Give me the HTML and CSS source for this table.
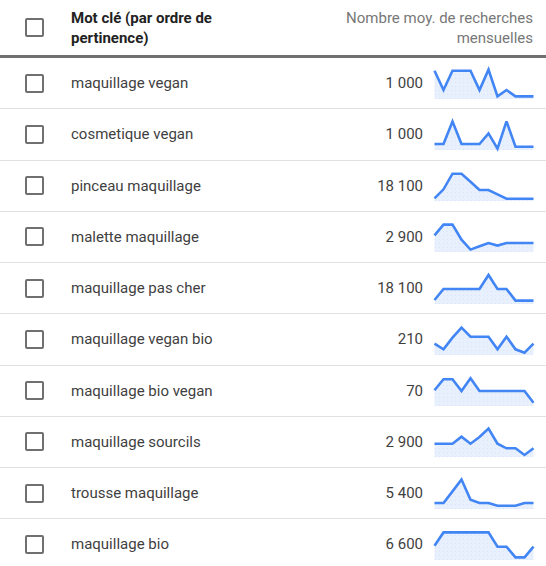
FILE: index.html
```html
<!DOCTYPE html>
<html lang="fr">
<head>
<meta charset="utf-8">
<link rel="stylesheet" href="styles.css">
</head>
<body>
<svg class="defs" width="0" height="0" aria-hidden="true">
  <defs>
    <pattern id="dots" width="4" height="4" patternUnits="userSpaceOnUse">
      <rect width="4" height="4" fill="#e9f0fd"/>
      <rect x="1" y="1" width="1" height="1" fill="#d9e5fa"/>
    </pattern>
  </defs>
</svg>
<div class="table">
  <div class="row head">
    <span class="cb"></span>
    <div class="kw-head">Mot clé (par ordre de<br>pertinence)</div>
    <div class="vol-head">Nombre moy. de recherches<br>mensuelles</div>
  </div>

  <div class="row">
    <span class="cb"></span><div class="kw">maquillage vegan</div><div class="num">1 000</div>
    <svg class="spark" viewBox="0 0 100 30"><polygon class="area" points="0.5,1.7 9.5,21 18.5,1.7 27.5,1.7 36.5,1.7 45.5,21 54.5,0.7 63.5,27.4 72.5,21 81.5,27.4 90.5,27.4 99.5,27.4 99.5,30 0.5,30"/><polyline class="line" points="0.5,1.7 9.5,21 18.5,1.7 27.5,1.7 36.5,1.7 45.5,21 54.5,0.7 63.5,27.4 72.5,21 81.5,27.4 90.5,27.4 99.5,27.4"/></svg>
  </div>

  <div class="row">
    <span class="cb"></span><div class="kw">cosmetique vegan</div><div class="num">1 000</div>
    <svg class="spark" viewBox="0 0 100 30"><polygon class="area" points="0.5,24 9.5,24 18.5,1.4 27.5,24 36.5,24 45.5,24 54.5,13.4 63.5,28.6 72.5,1.4 81.5,26.7 90.5,26.7 99.5,26.7 99.5,30 0.5,30"/><polyline class="line" points="0.5,24 9.5,24 18.5,1.4 27.5,24 36.5,24 45.5,24 54.5,13.4 63.5,28.6 72.5,1.4 81.5,26.7 90.5,26.7 99.5,26.7"/></svg>
  </div>

  <div class="row">
    <span class="cb"></span><div class="kw">pinceau maquillage</div><div class="num">18 100</div>
    <svg class="spark" viewBox="0 0 100 30"><polygon class="area" points="0.5,27.3 9.5,18.3 18.5,2.7 27.5,2.7 36.5,10.7 45.5,19 54.5,19 63.5,23.3 72.5,27.7 81.5,27.7 90.5,27.7 99.5,27.7 99.5,30 0.5,30"/><polyline class="line" points="0.5,27.3 9.5,18.3 18.5,2.7 27.5,2.7 36.5,10.7 45.5,19 54.5,19 63.5,23.3 72.5,27.7 81.5,27.7 90.5,27.7 99.5,27.7"/></svg>
  </div>

  <div class="row">
    <span class="cb"></span><div class="kw">malette maquillage</div><div class="num">2 900</div>
    <svg class="spark" viewBox="0 0 100 30"><polygon class="area" points="0.5,13.3 9.5,2.6 18.5,2.6 27.5,17.6 36.5,27.6 45.5,24.3 54.5,21 63.5,23.6 72.5,21 81.5,21 90.5,21 99.5,21 99.5,30 0.5,30"/><polyline class="line" points="0.5,13.3 9.5,2.6 18.5,2.6 27.5,17.6 36.5,27.6 45.5,24.3 54.5,21 63.5,23.6 72.5,21 81.5,21 90.5,21 99.5,21"/></svg>
  </div>

  <div class="row">
    <span class="cb"></span><div class="kw">maquillage pas cher</div><div class="num">18 100</div>
    <svg class="spark" viewBox="0 0 100 30"><polygon class="area" points="0.5,26 9.5,15 18.5,15 27.5,15 36.5,15 45.5,15 54.5,1 63.5,15 72.5,15 81.5,26.6 90.5,26.6 99.5,26.6 99.5,30 0.5,30"/><polyline class="line" points="0.5,26 9.5,15 18.5,15 27.5,15 36.5,15 45.5,15 54.5,1 63.5,15 72.5,15 81.5,26.6 90.5,26.6 99.5,26.6"/></svg>
  </div>

  <div class="row">
    <span class="cb"></span><div class="kw">maquillage vegan bio</div><div class="num">210</div>
    <svg class="spark" viewBox="0 0 100 30"><polygon class="area" points="0.5,18.7 9.5,24.3 18.5,12.7 27.5,2.7 36.5,11.7 45.5,11.7 54.5,11.7 63.5,24.3 72.5,11.7 81.5,24.3 90.5,27.7 99.5,18.7 99.5,30 0.5,30"/><polyline class="line" points="0.5,18.7 9.5,24.3 18.5,12.7 27.5,2.7 36.5,11.7 45.5,11.7 54.5,11.7 63.5,24.3 72.5,11.7 81.5,24.3 90.5,27.7 99.5,18.7"/></svg>
  </div>

  <div class="row">
    <span class="cb"></span><div class="kw">maquillage bio vegan</div><div class="num">70</div>
    <svg class="spark" viewBox="0 0 100 30"><polygon class="area" points="0.5,14.3 9.5,3.3 18.5,3.3 27.5,15 36.5,2.3 45.5,15 54.5,15 63.5,15 72.5,15 81.5,15 90.5,15 99.5,26.7 99.5,30 0.5,30"/><polyline class="line" points="0.5,14.3 9.5,3.3 18.5,3.3 27.5,15 36.5,2.3 45.5,15 54.5,15 63.5,15 72.5,15 81.5,15 90.5,15 99.5,26.7"/></svg>
  </div>

  <div class="row">
    <span class="cb"></span><div class="kw">maquillage sourcils</div><div class="num">2 900</div>
    <svg class="spark" viewBox="0 0 100 30"><polygon class="area" points="0.5,16.7 9.5,16.7 18.5,16.7 27.5,9.7 36.5,16.7 45.5,10 54.5,1.5 63.5,16.7 72.5,21.3 81.5,21.3 90.5,28 99.5,21.3 99.5,30 0.5,30"/><polyline class="line" points="0.5,16.7 9.5,16.7 18.5,16.7 27.5,9.7 36.5,16.7 45.5,10 54.5,1.5 63.5,16.7 72.5,21.3 81.5,21.3 90.5,28 99.5,21.3"/></svg>
  </div>

  <div class="row">
    <span class="cb"></span><div class="kw">trousse maquillage</div><div class="num">5 400</div>
    <svg class="spark" viewBox="0 0 100 30"><polygon class="area" points="0.5,24 9.5,24 18.5,12.4 27.5,0.5 36.5,20.7 45.5,24 54.5,24 63.5,26.7 72.5,26.7 81.5,26.7 90.5,24 99.5,24 99.5,30 0.5,30"/><polyline class="line" points="0.5,24 9.5,24 18.5,12.4 27.5,0.5 36.5,20.7 45.5,24 54.5,24 63.5,26.7 72.5,26.7 81.5,26.7 90.5,24 99.5,24"/></svg>
  </div>

  <div class="row">
    <span class="cb"></span><div class="kw">maquillage bio</div><div class="num">6 600</div>
    <svg class="spark" viewBox="0 0 100 30"><polygon class="area" points="0.5,15.7 9.5,2.4 18.5,2.4 27.5,2.4 36.5,2.4 45.5,2.4 54.5,2.4 63.5,16.7 72.5,16.7 81.5,27.4 90.5,27.4 99.5,16.7 99.5,30 0.5,30"/><polyline class="line" points="0.5,15.7 9.5,2.4 18.5,2.4 27.5,2.4 36.5,2.4 45.5,2.4 54.5,2.4 63.5,16.7 72.5,16.7 81.5,27.4 90.5,27.4 99.5,16.7"/></svg>
  </div>
</div>
</body>
</html>
```

FILE: styles.css
```css
html, body {
  margin: 0;
  padding: 0;
  background: #ffffff;
}

body {
  font-family: Roboto, "Liberation Sans", Arial, sans-serif;
  color: #3c3c3c;
  overflow: hidden;
}

.defs {
  position: absolute;
  width: 0;
  height: 0;
}

.table {
  display: flex;
  flex-direction: column;
  width: 546px;
}

.row {
  display: grid;
  grid-template-columns: 71px 1fr auto 100px;
  column-gap: 0;
  align-items: center;
  height: 50.25px;
  border-bottom: 1px solid #e0e0e0;
  padding-right: 12px;
  box-sizing: content-box;
}

.row.head {
  grid-template-columns: 71px 1fr auto;
  height: 55px;
  border-bottom: 3px solid #707070;
}

.cb {
  display: block;
  width: 15px;
  height: 15px;
  margin-left: 25px;
  border: 2.6px solid #707070;
  border-radius: 2px;
}

.kw-head {
  font-size: 15px;
  font-weight: 700;
  line-height: 20px;
  color: #222222;
}

.vol-head {
  font-size: 15px;
  line-height: 20px;
  color: #777777;
  text-align: right;
  margin-right: 1px;
}

.kw {
  font-size: 15px;
  color: #3f3f3f;
}

.num {
  font-size: 15px;
  color: #3f3f3f;
  text-align: right;
  margin-right: 11px;
}

.spark {
  display: block;
  width: 100px;
  height: 30px;
  overflow: visible;
  margin-top: 1px;
}

.area {
  fill: url(#dots);
  stroke: none;
}

.line {
  fill: none;
  stroke: #4285f4;
  stroke-width: 2.6;
  stroke-linejoin: miter;
  stroke-miterlimit: 3;
}
```
